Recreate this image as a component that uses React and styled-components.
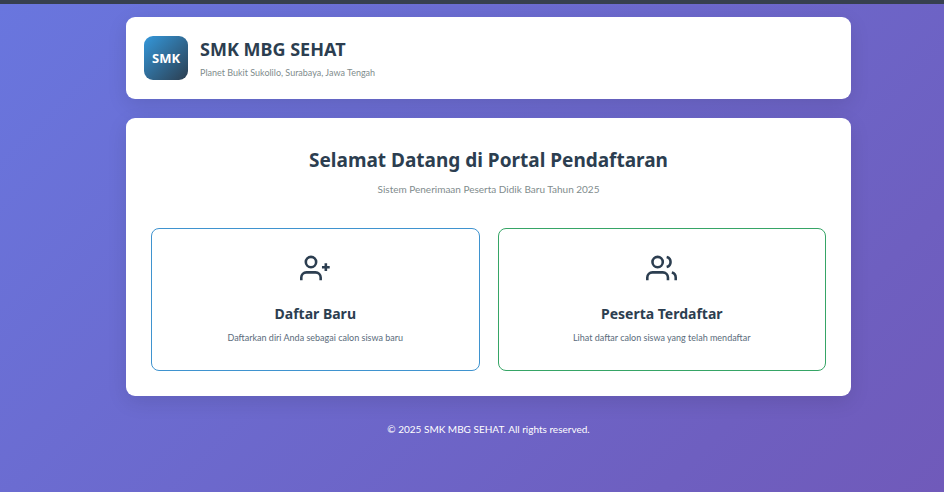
import React from "react";
import styled, { createGlobalStyle } from "styled-components";

const GlobalStyle = createGlobalStyle`
  * { box-sizing: border-box; margin: 0; padding: 0; }
  body {
    font-family: Lato, "Open Sans", sans-serif;
    color: #2c3e50;
  }
  h1, h2, h3 {
    font-family: "Noto Sans", "Open Sans", sans-serif;
    font-weight: 700;
  }
`;

const Page = styled.div`
  min-height: 100vh;
  border-top: 4px solid #37404f;
  padding: 13px 0 24px 33px;
  background: linear-gradient(135deg, #6976de 0%, #6e5fc0 80%, #705aba 100%);
`;

const Container = styled.div`
  width: 100%;
  max-width: 725px;
  margin: 0 auto;
`;

const Panel = styled.div`
  background: #fff;
  border-radius: 9px;
  box-shadow: 0 6px 20px rgba(0, 0, 0, 0.1);
`;

const Header = styled(Panel).attrs({ as: "header" })`
  display: flex;
  align-items: center;
  gap: 12px;
  padding: 19px 18px;
  margin-bottom: 19px;
`;

const Logo = styled.div`
  display: grid;
  place-items: center;
  width: 44px;
  height: 44px;
  border-radius: 9px;
  background: linear-gradient(135deg, #3498db, #2c3e50);
  color: #fff;
  font-family: "Noto Sans", "Open Sans", sans-serif;
  font-size: 13px;
  font-weight: 700;
`;

const SchoolName = styled.h1`
  font-size: 18px;
  line-height: 24px;
`;

const Address = styled.p`
  margin-top: 6px;
  font-size: 9px;
  line-height: 12px;
  color: #7f8c8d;
`;

const Main = styled(Panel).attrs({ as: "main" })`
  padding: 28px 25px 25px;
  text-align: center;
`;

const Title = styled.h2`
  font-size: 19px;
  line-height: 28px;
`;

const Subtitle = styled.p`
  margin: 8px 0 32px;
  font-size: 10px;
  line-height: 14px;
  color: #7f8c8d;
`;

const Menu = styled.nav`
  display: grid;
  grid-template-columns: 1fr 1fr;
  gap: 18px;
`;

const MenuCard = styled.a`
  display: flex;
  flex-direction: column;
  align-items: center;
  padding: 24px 18px 26px;
  border: 1px solid ${(p) => p.$accent};
  border-radius: 8px;
  color: inherit;
  text-decoration: none;
`;

const Icon = styled.svg`
  width: 31px;
  height: 31px;
  fill: none;
  stroke: #2c3e50;
  stroke-width: 2;
`;

const CardTitle = styled.h3`
  margin-top: 20px;
  font-size: 14px;
  line-height: 20px;
`;

const CardText = styled.p`
  margin-top: 8px;
  font-size: 9px;
  line-height: 12px;
  color: #5a6b7b;
`;

const Footer = styled.footer`
  margin-top: 26px;
  text-align: center;
  font-size: 10px;
  line-height: 14px;
  color: #fff;
`;

export default function App() {
  return (
    <Page>
      <GlobalStyle />
      <Container>
        <Header>
          <Logo>SMK</Logo>
          <div>
            <SchoolName>SMK MBG SEHAT</SchoolName>
            <Address>Planet Bukit Sukolilo, Surabaya, Jawa Tengah</Address>
          </div>
        </Header>
        <Main>
          <Title>Selamat Datang di Portal Pendaftaran</Title>
          <Subtitle>Sistem Penerimaan Peserta Didik Baru Tahun 2025</Subtitle>
          <Menu>
            <MenuCard href="#daftar" $accent="#3f93cf">
              <Icon viewBox="0 0 24 24" aria-hidden="true">
                <path d="M16 21v-2a4 4 0 0 0-4-4H5a4 4 0 0 0-4 4v2" />
                <circle cx="8.5" cy="7" r="4" />
                <path d="M20 8v6M23 11h-6" />
              </Icon>
              <CardTitle>Daftar Baru</CardTitle>
              <CardText>Daftarkan diri Anda sebagai calon siswa baru</CardText>
            </MenuCard>
            <MenuCard href="#peserta" $accent="#36a566">
              <Icon viewBox="0 0 24 24" aria-hidden="true">
                <path d="M17 21v-2a4 4 0 0 0-4-4H5a4 4 0 0 0-4 4v2" />
                <circle cx="9" cy="7" r="4" />
                <path d="M23 21v-2a4 4 0 0 0-3-3.87M16 3.13a4 4 0 0 1 0 7.75" />
              </Icon>
              <CardTitle>Peserta Terdaftar</CardTitle>
              <CardText>Lihat daftar calon siswa yang telah mendaftar</CardText>
            </MenuCard>
          </Menu>
        </Main>
        <Footer>© 2025 SMK MBG SEHAT. All rights reserved.</Footer>
      </Container>
    </Page>
  );
}
